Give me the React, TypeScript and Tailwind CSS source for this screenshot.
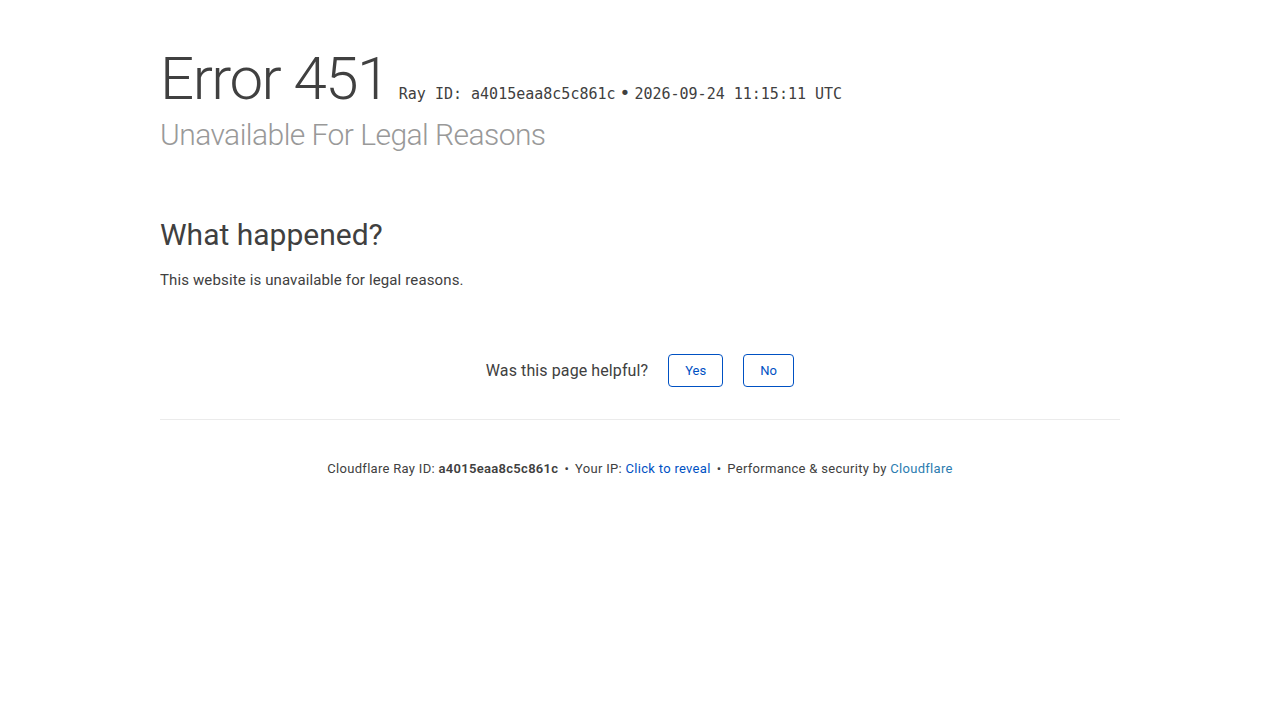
export default function App() {
  const sans = "font-['Roboto','Inter','Noto_Sans',sans-serif]";
  const mono = "font-['DejaVu_Sans_Mono','Liberation_Mono',monospace]";

  return (
    <div className={`min-h-screen bg-white text-[#404040] ${sans}`}>
      <div className="mx-auto w-[960px] pt-[41px]">
        <header>
          <div className="flex items-baseline">
            <h1 className="text-[60px] font-light leading-[76px] tracking-[-1.5px] text-[#404040]">
              Error 451
            </h1>
            <span className={`ml-[10px] text-[15px] text-[#404040] ${mono}`}>
              Ray ID: a4015eaa8c5c861c
              <span className="mx-[4px] text-[18px]">•</span>
              2026-09-24 11:15:11 UTC
            </span>
          </div>
          <h2 className="-mt-[1px] text-[30px] font-light leading-[38px] tracking-[-0.55px] text-[#999999]">
            Unavailable For Legal Reasons
          </h2>
        </header>

        <section className="mt-[62px]">
          <h2 className="text-[30px] font-normal leading-[38px] text-[#404040]">
            What happened?
          </h2>
          <p className="mt-[14px] text-[15px] leading-[24px] tracking-[0.13px] text-[#404040]">
            This website is unavailable for legal reasons.
          </p>
        </section>

        <div className="mt-[62px] flex items-center justify-center gap-[20px]">
          <span className="text-[16px] tracking-[0.1px] text-[#404040]">Was this page helpful?</span>
          <div className="flex gap-[20px]">
            <button className="h-[33px] w-[55px] rounded-[4px] border border-[#0051c3] text-[13px] text-[#0051c3]">
              Yes
            </button>
            <button className="h-[33px] w-[51px] rounded-[4px] border border-[#0051c3] text-[13px] text-[#0051c3]">
              No
            </button>
          </div>
        </div>

        <div className="mt-[32px] border-t border-[#ebebeb]" />

        <footer className="mt-[39px] flex items-center justify-center gap-[6px] text-[13px] tracking-[0.3px] text-[#404040]">
          <span>
            Cloudflare Ray ID: <span className="font-semibold">a4015eaa8c5c861c</span>
          </span>
          <span>•</span>
          <span>
            Your IP: <button className="tracking-[0.3px] text-[#0051c3]">Click to reveal</button>
          </span>
          <span>•</span>
          <span>
            Performance &amp; security by{" "}
            <a className="text-[#2c7cb0]" href="#">
              Cloudflare
            </a>
          </span>
        </footer>
      </div>
    </div>
  );
}
